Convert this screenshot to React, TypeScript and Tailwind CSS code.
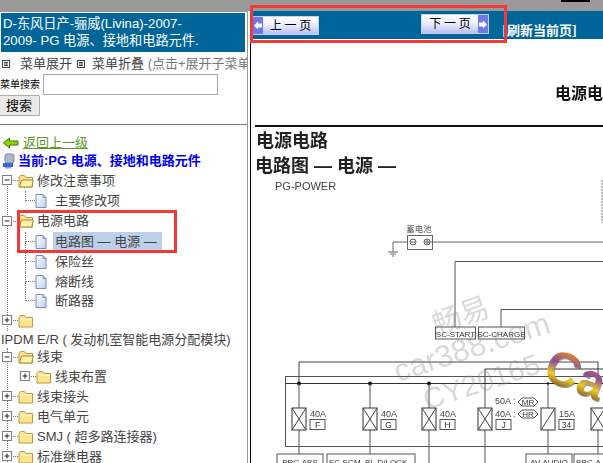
import type { ReactNode } from "react";

const cjk = "font-['Liberation_Sans','Noto_Sans_CJK_SC',sans-serif]";

function PlusBox({ open }: { open?: boolean }) {
  return (
    <svg width="11" height="11" viewBox="0 0 11 11" className="shrink-0">
      <rect x="0.5" y="0.5" width="9" height="9" fill="#fff" stroke="#7f7f7f" />
      <path d="M2.5 5h5" stroke="#222" />
      {!open && <path d="M5 2.5v5" stroke="#222" />}
    </svg>
  );
}

function Folder({ open }: { open?: boolean }) {
  return (
    <svg width="16" height="14" viewBox="0 0 16 14" className="shrink-0">
      <path d="M1 3.5 2.5 1.5h4L8 3.5h6.5v9.5H1z" fill="#fbe58f" stroke="#b99a3c" />
      {open ? (
        <path d="M1.5 13 3.5 6h11.800l-1.500 7z" fill="#fff0ae" stroke="#a8862c" />
      ) : (
        <path d="M2 5h12" stroke="#fff8d2" />
      )}
    </svg>
  );
}

function Page() {
  return (
    <svg width="12" height="14" viewBox="0 0 12 14" className="shrink-0">
      <defs>
        <linearGradient id="pg" x1="0" y1="0" x2="1" y2="1">
          <stop offset="0" stopColor="#ffffff" />
          <stop offset="1" stopColor="#bcd0ee" />
        </linearGradient>
      </defs>
      <path d="M1 .5h7l3 3v10H1z" fill="url(#pg)" stroke="#7f8cb8" />
      <path d="M8 .5v3h3" fill="none" stroke="#7f8cb8" />
    </svg>
  );
}

function Row({
  h,
  depth = 0,
  open,
  leaf,
  selected,
  last,
  children,
}: {
  h: string;
  depth?: number;
  open?: boolean;
  leaf?: boolean;
  selected?: boolean;
  last?: boolean;
  children?: ReactNode;
}) {
  return (
    <div className={`flex items-center ${h} pl-[2px]`}>
      {depth > 0 && <div className="w-[18px] shrink-0" />}
      {leaf ? (
        <div className="w-[15px] h-full shrink-0 flex flex-col">
          <div className="ml-[5px] h-1/2 border-l border-b border-dotted border-[#777]" />
          <div className={`ml-[5px] h-1/2 ${last ? "" : "border-l border-dotted border-[#777]"}`} />
        </div>
      ) : (
        <>
          <PlusBox open={open} />
          <div className="w-[5px] shrink-0 border-b border-dotted border-[#777]" />
        </>
      )}
      {leaf ? <Page /> : <Folder open={open} />}
      <span
        className={`${leaf ? (selected ? "ml-[6px] pl-[2px] pr-[2px] w-[109px] bg-[#bdd0ea] h-[19px] leading-[19px]" : "ml-[8px]") : "ml-[3px]"} whitespace-nowrap`}
      >
        {children}
      </span>
    </div>
  );
}

function NavBtn({ label, dir, w }: { label: string; dir: "l" | "r"; w: string }) {
  const arrow = (
    <div className="w-[10px] self-stretch bg-[#6f79e6] flex items-center justify-center">
      <svg width="8" height="9" viewBox="0 0 8 9">
        <path d={dir === "l" ? "M0 4.5 4 .5v2h4v4H4v2z" : "M8 4.5 4 .5v2H0v4h4v2z"} fill="#fff" />
      </svg>
    </div>
  );
  return (
    <div className={`flex ${w} items-stretch border border-[#c9cdf3] bg-gradient-to-b from-[#ffffff] via-[#e9ebfb] to-[#b9bef0]`}>
      {dir === "l" && arrow}
      <span className="flex-1 text-center text-[12px] leading-[16px] text-black whitespace-pre font-['Noto_Sans_CJK_SC',sans-serif]">{label}</span>
      {dir === "r" && arrow}
    </div>
  );
}

function Fuse({ x, amp, tag, slash }: { x: number; amp: string; tag: string; slash?: boolean }) {
  return (
    <g>
      <rect x={x - 7} y="408" width="14" height="22" fill="#fff" stroke="#333" />
      <path d={slash ? `M${x - 7} 430 L${x + 7} 408` : `M${x - 7} 408 L${x + 7} 430 M${x + 7} 408 L${x - 7} 430`} stroke="#444" fill="none" />
      <text x={x + 11} y="417" fontSize="9" fill="#444">{amp}</text>
      <rect x={x + 11} y="419.500" width="15" height="10" fill="#fff" stroke="#555" />
      <text x={x + 18.500} y="428" fontSize="8.500" fill="#333" textAnchor="middle">{tag}</text>
    </g>
  );
}

function Diagram() {
  return (
    <svg width="603" height="463" viewBox="0 0 603 463" className="absolute left-0 top-0 blur-[0.4px] font-['Liberation_Sans',sans-serif]">
      <text x="419" y="232" fontSize="8.500" fill="#555" textAnchor="middle" fontFamily="Noto Sans CJK SC">蓄电池</text>
      <rect x="407.500" y="235.500" width="25" height="14" fill="none" stroke="#666" />
      <circle cx="413" cy="242" r="3" fill="none" stroke="#555" />
      <path d="M411 242h4" stroke="#555" />
      <circle cx="427" cy="242" r="3" fill="none" stroke="#555" />
      <path d="M425 242h4M427 240v4" stroke="#555" />
      <path d="M393 252v-10h14M430 242H603" stroke="#666" fill="none" />
      <path d="M388 252h10M390 254h6M392 256h2" stroke="#666" />
      <path d="M602 180v43" stroke="#777" strokeDasharray="2 1" />
      <path d="M603 261.500H455V327" stroke="#555" fill="none" />
      <path d="M603 309.500H501V327" stroke="#555" fill="none" />
      <rect x="435.500" y="327" width="40" height="12" fill="#fff" stroke="#555" />
      <text x="455.500" y="336.500" fontSize="8" fill="#333" textAnchor="middle">SC-START</text>
      <rect x="478.500" y="327" width="46" height="12" fill="#fff" stroke="#555" />
      <text x="501.500" y="336.500" fontSize="8" fill="#333" textAnchor="middle">SC-CHARGE</text>
      <path d="M299 383v-21H598v20" stroke="#444" fill="none" />
      <path d="M485 383V369H603" stroke="#333" fill="none" />
      <rect x="285.500" y="376.500" width="330" height="70" fill="none" stroke="#555" />
      <path d="M285 383.500H603" stroke="#333" />
      {[299, 370, 429].map((x) => (
        <circle key={x} cx={x} cy="383.500" r="2" fill="#111" />
      ))}
      <circle cx="548" cy="383.500" r="1.200" fill="#111" />
      <path d="M299 384v79M370 384v79M429 384v79M485 384v79M548 384v79M598 420v43" stroke="#555" />
      <Fuse x={299} amp="40A" tag="F" />
      <Fuse x={370} amp="40A" tag="G" />
      <Fuse x={429} amp="40A" tag="H" />
      <Fuse x={485} amp="" tag="J" />
      <Fuse x={548} amp="15A" tag="34" slash />
      <rect x="591" y="408" width="14" height="22" fill="#fff" stroke="#333" />
      <path d="M591 408 605 430M605 408 591 430" stroke="#444" />
      <text x="495" y="404" fontSize="9" fill="#444">50A :</text>
      <text x="495" y="417" fontSize="9" fill="#444">40A :</text>
      <path d="M518 402l4-4h12l4 4-4 4h-12z M518 414l4-4h12l4 4-4 4h-12z" fill="#fff" stroke="#555" />
      <text x="528" y="405" fontSize="8" fill="#333" textAnchor="middle">MR</text>
      <text x="528" y="417" fontSize="8" fill="#333" textAnchor="middle">HR</text>
      <rect x="277" y="454" width="46" height="14" fill="#fff" stroke="#555" />
      <text x="300" y="465" fontSize="8" fill="#333" textAnchor="middle">BRC-ABS</text>
      <rect x="327" y="454" width="88" height="14" fill="#fff" stroke="#555" />
      <text x="329" y="465" fontSize="8" fill="#333">EC-ECM, BL-D/LOCK</text>
      <rect x="526" y="454" width="46" height="14" fill="#fff" stroke="#555" />
      <text x="549" y="465" fontSize="8" fill="#333" textAnchor="middle">AV-AUDIO</text>
      <rect x="574" y="454" width="40" height="14" fill="#fff" stroke="#555" />
      <text x="576" y="465" fontSize="8" fill="#333">BRC-A</text>
      <text x="0" y="0" fontSize="29" fill="#8a8a8a" opacity="0.32" transform="translate(437 335) rotate(-20)" fontFamily="Noto Sans CJK SC">畅易</text>
      <text x="0" y="0" fontSize="31" fill="#8a8a8a" opacity="0.32" transform="translate(398 382) rotate(-18)">car388.com</text>
      <text x="0" y="0" fontSize="29" fill="#8a8a8a" opacity="0.32" transform="translate(427 410) rotate(-18)">CY20165</text>
      <defs>
        <linearGradient id="logo" gradientUnits="userSpaceOnUse" x1="0" y1="-36" x2="0" y2="2">
          <stop offset="0.05" stopColor="#e08a2a" />
          <stop offset="0.4" stopColor="#8a4a9c" />
          <stop offset="0.72" stopColor="#e8d020" />
          <stop offset="1" stopColor="#8a5a2a" />
        </linearGradient>
      </defs>
      <g transform="translate(541 378) rotate(22)" fontSize="48" fontWeight="700">
        <text x="1" y="1" fill="#555" opacity="0.6">Ca</text>
        <text x="0" y="0" fill="url(#logo)">Ca</text>
      </g>
    </svg>
  );
}

export default function App() {
  return (
    <div className={`relative w-[603px] h-[463px] overflow-hidden bg-white flex ${cjk}`}>
      <div className="w-[248px] shrink-0 h-full border-r border-[#999] overflow-hidden flex flex-col text-[13px] text-[#444]">
        <div className="h-[12px] bg-[#999] shrink-0" />
        <div className="mx-[1px] mt-[1px] w-[244px] h-[39px] bg-[#006699] text-white px-[2px] pt-[2px] leading-[17px] text-[13.200px] shrink-0">
          D-东风日产-骊威(Livina)-2007-
          <br />
          2009- PG 电源、接地和电路元件.
        </div>
        <div className="flex items-center h-[20px] mt-[2px] whitespace-nowrap">
          <svg width="8" height="8" viewBox="0 0 8 8" className="ml-[2px] mr-[10px] shrink-0">
            <rect x=".5" y=".5" width="7" height="7" fill="none" stroke="#444" />
            <path d="M2 2.500h4M2 4h4M2 5.500h4" stroke="#444" />
          </svg>
          <span>菜单展开</span>
          <svg width="8" height="8" viewBox="0 0 8 8" className="ml-[5px] mr-[7px] shrink-0">
            <rect x=".5" y=".5" width="7" height="7" fill="none" stroke="#444" />
            <path d="M2 2.500h4M2 4h4M2 5.500h4" stroke="#444" />
          </svg>
          <span>菜单折叠 <span className="text-[#777]">(点击+展开子菜单)</span></span>
        </div>
        <div className="flex items-center h-[21px]">
          <span className="text-[10px] text-black w-[43px] whitespace-nowrap">菜单搜索</span>
          <div className="w-[175px] h-[21px] border border-[#a9a9a9] bg-white" />
        </div>
        <div className="ml-[-2px] w-[42px] h-[21px] border border-[#adadad] bg-[#e9e9e9] rounded-[1px] text-center text-[13px] leading-[19px] text-black">
          搜索
        </div>
        <div className="mt-[8px] border-t border-[#777] shrink-0" />
        <div className="flex items-center h-[18px] mt-[9px] pl-[3px]">
          <svg width="16" height="12" viewBox="0 0 16 12" className="shrink-0">
            <path d="M.5 6 6.500 1v3h8.500v4H6.500v3z" fill="#8fd400" stroke="#3d7a00" />
          </svg>
          <span className="ml-[4px] text-[#5a9a2a] underline">返回上一级</span>
        </div>
        <div className="flex items-center h-[18px] pl-[2px] font-bold text-[#0000ee] whitespace-nowrap">
          <svg width="14" height="16" viewBox="0 0 14 16" className="shrink-0">
            <rect x="3" y="1" width="9" height="9" rx="2" fill="#aeb8c8" stroke="#7b8aa8" />
            <rect x="1" y="10" width="10" height="4" fill="#3e63d8" />
            <rect x="3" y="14" width="6" height="1.500" fill="#8aa0e8" />
          </svg>
          <span className="ml-[2px]">当前:PG 电源、接地和电路元件</span>
        </div>
        <div className="relative mt-[1px]">
          <div className="absolute left-[7px] top-[10px] h-[150px] border-l border-dotted border-[#777]" />
          <div className="absolute left-[7px] top-[177px] h-[120px] border-l border-dotted border-[#777]" />
          <div className="relative">
            <Row h="h-[20px]" open>修改注意事项</Row>
            <Row h="h-[20px]" depth={1} leaf last>主要修改项</Row>
            <Row h="h-[21px]" open>电源电路</Row>
            <Row h="h-[20px]" depth={1} leaf selected>电路图 — 电源 —</Row>
            <Row h="h-[20px]" depth={1} leaf>保险丝</Row>
            <Row h="h-[20px]" depth={1} leaf>熔断线</Row>
            <Row h="h-[19px]" depth={1} leaf last>断路器</Row>
            <Row h="h-[20px]" />
            <div className="h-[17px] leading-[17px] pl-[1px] whitespace-nowrap bg-white">IPDM E/R ( 发动机室智能电源分配模块)</div>
            <Row h="h-[19px]" open>线束</Row>
            <Row h="h-[20px]" depth={1}>线束布置</Row>
            <Row h="h-[20px]">线束接头</Row>
            <Row h="h-[20px]">电气单元</Row>
            <Row h="h-[20px]">SMJ ( 超多路连接器)</Row>
            <Row h="h-[20px]">标准继电器</Row>
          </div>
        </div>
      </div>
      <div className="ml-[2px] flex-1 flex flex-col border-l border-black relative">
        <div className="h-[11px] bg-[#999] shrink-0 ml-[-3px]" />
        <div className="h-[29px] bg-[#006699] ml-[-1px] flex items-start shrink-0 border-b border-white">
          <div className="mt-[5px] ml-[2px]"><NavBtn label="上 一 页" dir="l" w="w-[67px] h-[19px]" /></div>
          <div className="mt-[3px] ml-[102px]"><NavBtn label="下 一 页" dir="r" w="w-[68px] h-[20px]" /></div>
          <span className="ml-[13px] mt-[11px] text-white font-bold text-[13px] leading-[16px] whitespace-nowrap font-['Noto_Sans_CJK_SC',sans-serif]">[刷新当前页]</span>
        </div>
        <div className="absolute left-[310px] top-0 w-[29px] h-[2px] bg-black" />
        <div className="flex-1 text-black font-bold blur-[0.3px]">
          <div className="pl-[304px] mt-[43px] h-[22px] text-[16px] leading-[22px] text-[#111] whitespace-nowrap">电源电路</div>
          <div className="mt-[20px] mx-[4px] border-t-2 border-[#111]" />
          <div className="pl-[5px] mt-[2px] text-[18px] leading-[24px] text-[#222]">电源电路</div>
          <div className="pl-[4px] mt-[1px] text-[18px] leading-[24px] text-[#222] whitespace-nowrap">电路图 — 电源 —</div>
          <div className="pl-[24px] mt-[1px] text-[11px] leading-[14px] font-normal text-[#444] font-['Liberation_Sans',sans-serif]">PG-POWER</div>
        </div>
      </div>
      <Diagram />
      <div className="absolute left-[17px] top-[210px] w-[160px] h-[43px] border-[3px] border-[#f33838]" />
      <div className="absolute left-[250px] top-[5px] w-[257px] h-[38px] border-[3px] border-[#f33838]" />
    </div>
  );
}
